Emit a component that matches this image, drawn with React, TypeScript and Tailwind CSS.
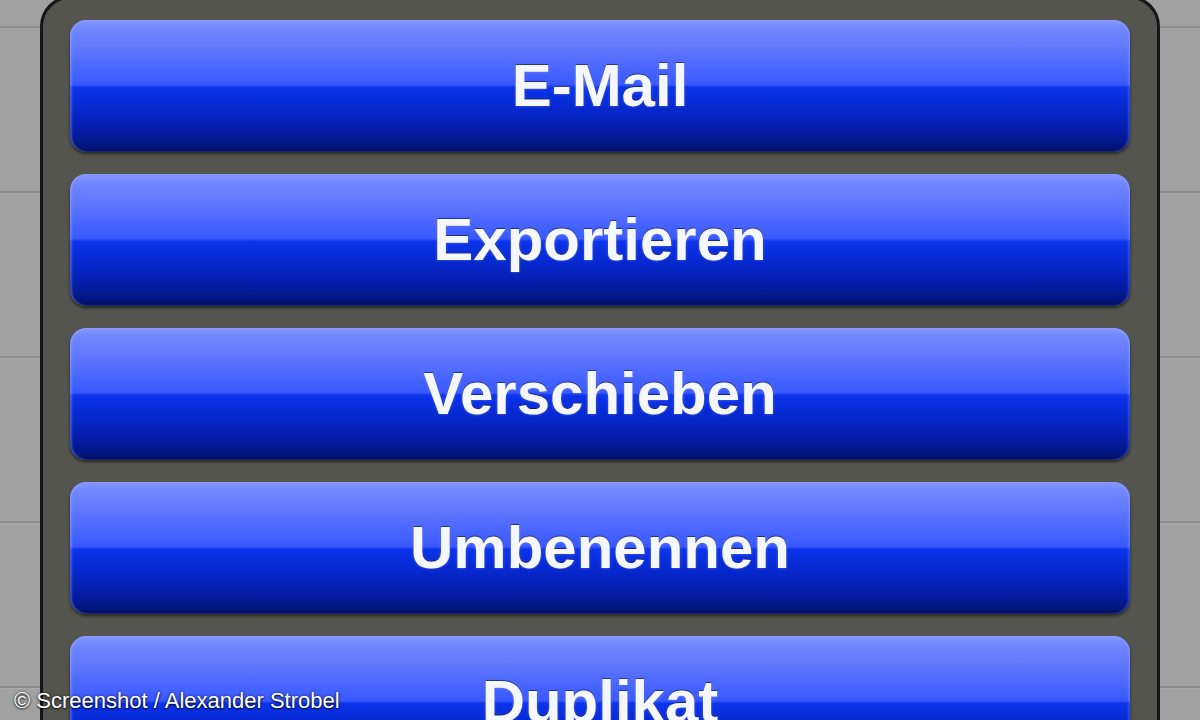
const actions = ['E-Mail', 'Exportieren', 'Verschieben', 'Umbenennen', 'Duplikat'];

function ActionButton({ label }: { label: string }) {
  return (
    <button
      type="button"
      className="flex h-[132px] w-full shrink-0 items-center justify-center rounded-[16px] bg-[linear-gradient(to_bottom,#8797ff_0%,#7288ff_6%,#5a74ff_25%,#3858ff_49%,#0c34ec_51%,#0629d2_65%,#041fae_82%,#02157c_96%,#010e55_100%)] shadow-[0_2px_3px_rgba(0,0,0,0.55),inset_2px_0_2px_rgba(170,185,255,0.35),inset_-2px_0_2px_rgba(170,185,255,0.25)]"
    >
      <span className="font-['Liberation_Sans',Arial,sans-serif] text-[60px] font-bold leading-none text-[#f5f7ff] [text-shadow:0_-1px_1px_rgba(0,0,40,0.6),0_0_3px_rgba(150,170,255,0.5)]">
        {label}
      </span>
    </button>
  );
}

export default function App() {
  return (
    <div className="relative h-[720px] w-[1200px] overflow-hidden bg-[repeating-linear-gradient(to_bottom,#a1a1a1_0px,#a1a1a1_26px,#8d8d8d_26px,#8d8d8d_28px,#a8a8a8_28px,#a8a8a8_29px,#a1a1a1_29px,#a1a1a1_165px)]">
      <div className="mx-[40px] mt-[-4px] h-[760px] w-[1120px] rounded-t-[30px] border-[3px] border-b-0 border-[#161616] bg-[#55554f] px-[27px] pt-[21px]">
        <div className="flex flex-col gap-[22px]">
          {actions.map((a) => (
            <ActionButton key={a} label={a} />
          ))}
        </div>
      </div>
      {/* photo credit overlay */}
      <div className="absolute bottom-[8px] left-[14px] font-['Liberation_Sans',Arial,sans-serif] text-[22px] leading-none text-white [text-shadow:0_1px_2px_rgba(0,0,0,0.8),0_0_3px_rgba(0,0,0,0.6)]">
        © Screenshot / Alexander Strobel
      </div>
    </div>
  );
}
